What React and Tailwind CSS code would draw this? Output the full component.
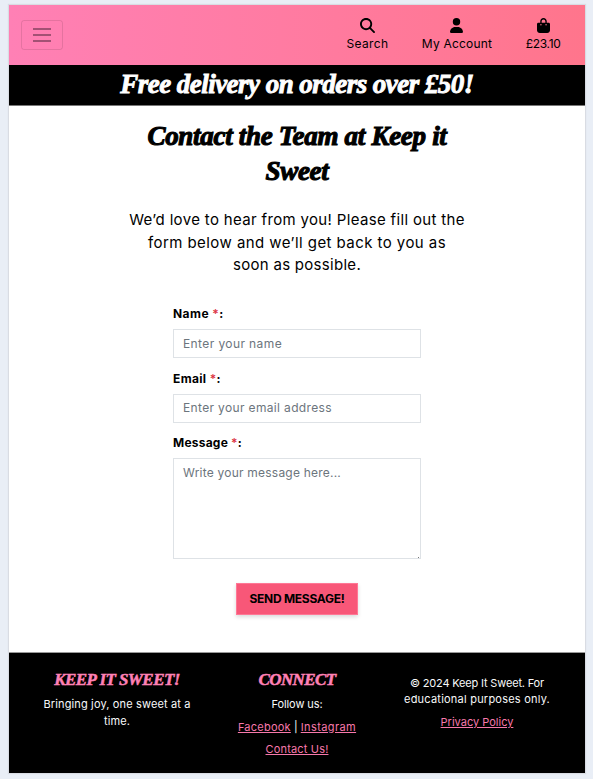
const display = "font-['Liberation_Serif',serif] font-bold italic";
const linkStyle = 'text-[#f778ab] underline underline-offset-[1px] decoration-1';

function SearchIcon() {
  return (
    <svg viewBox="0 0 512 512" className="size-[15px]" fill="currentColor">
      <path d="M416 208c0 45.900-14.900 88.300-40 122.700L502.600 457.400c12.500 12.500 12.500 32.800 0 45.300s-32.800 12.500-45.300 0L330.700 376c-34.400 25.200-76.800 40-122.700 40C93.100 416 0 322.900 0 208S93.100 0 208 0S416 93.100 416 208zM208 352a144 144 0 1 0 0-288 144 144 0 1 0 0 288z" />
    </svg>
  );
}

function UserIcon() {
  return (
    <svg viewBox="0 0 448 512" className="h-[15px] w-[13px]" fill="currentColor">
      <path d="M224 256A128 128 0 1 0 224 0a128 128 0 1 0 0 256zm-45.700 48C79.800 304 0 383.800 0 482.300C0 498.700 13.300 512 29.700 512H418.300c16.400 0 29.700-13.300 29.700-29.700C448 383.800 368.200 304 269.700 304H178.300z" />
    </svg>
  );
}

function BagIcon() {
  return (
    <svg viewBox="0 0 448 512" className="h-[15px] w-[13px]" fill="currentColor">
      <path d="M160 112c0-35.300 28.700-64 64-64s64 28.700 64 64v48H160V112zm-48 48H48c-26.500 0-48 21.500-48 48V416c0 53 43 96 96 96H352c53 0 96-43 96-96V208c0-26.500-21.500-48-48-48H336V112C336 50.100 285.900 0 224 0S112 50.100 112 112v48zm24 48a24 24 0 1 1 0 48 24 24 0 1 1 0-48zm152 24a24 24 0 1 1 48 0 24 24 0 1 1-48 0z" />
    </svg>
  );
}

function NavItem({ icon, label, className }) {
  return (
    <a className={`flex flex-col items-center text-[12px] leading-[18px] whitespace-nowrap ${className}`}>
      {icon}
      <span className="mt-[2px]">{label}</span>
    </a>
  );
}

function Label({ children, className }) {
  return (
    <label className={`block text-[12px] leading-[18px] font-bold ${className}`}>
      {children} <span className="font-semibold text-[#dc3545]">*</span>:
    </label>
  );
}

export default function App() {
  return (
    <div className="h-[779px] w-full bg-[#e9eef6] pt-[5px] pl-[9px] font-[Inter,sans-serif] text-black">
      <div className="flex h-[768px] w-[576px] flex-col bg-white shadow-[0_0_1px_1px_#d9dce3]">
        <header className="flex h-[60px] shrink-0 items-start justify-between bg-linear-to-r from-[#ff80b5] to-[#ff758c] pr-[24.500px] pl-[12px]">
          <button className="mt-[15px] flex h-[30px] w-[42px] flex-col items-center justify-center gap-[4px] rounded-[3px] border border-black/10">
            <span className="h-[2px] w-[18px] bg-[#a35174]" />
            <span className="h-[2px] w-[18px] bg-[#a35174]" />
            <span className="h-[2px] w-[18px] bg-[#a35174]" />
          </button>
          <nav className="flex gap-[33.500px] pt-[13px]">
            <NavItem icon={<SearchIcon />} label="Search" className="tracking-[0.31px]" />
            <NavItem icon={<UserIcon />} label="My Account" className="tracking-[0.2px]" />
            <NavItem icon={<BagIcon />} label="£23.10" className="tracking-[-0.3px]" />
          </nav>
        </header>

        <div className="h-[41px] shrink-0 border-b border-[#777] bg-black text-center">
          <h2 className={`${display} text-[27px] leading-[38px] tracking-[-0.54px] text-white [-webkit-text-stroke:0.9px_white]`}>
            Free delivery on orders over £50!
          </h2>
        </div>

        <main className="flex h-[546px] shrink-0 flex-col items-center">
          <h1 className={`${display} mt-[13px] text-center text-[27px] leading-[35px] tracking-[-0.3px] [-webkit-text-stroke:1.1px_black]`}>
            Contact the Team at Keep it
            <br />
            Sweet
          </h1>
          <p className="mt-[20px] text-center text-[15px] leading-[22.500px] whitespace-nowrap">
            <span className="tracking-[0.34px]">We’d love to hear from you! Please fill out the</span>
            <br />
            <span className="tracking-[0.44px]">form below and we’ll get back to you as</span>
            <br />
            <span className="tracking-[0.29px]">soon as possible.</span>
          </p>
          <form className="mt-[28px] flex w-[248px] flex-col">
            <Label className="tracking-[0.45px]">Name</Label>
            <input
              className="mt-[6px] h-[29px] border border-[#dee2e6] px-[9px] text-[12px] tracking-[0.4px] placeholder:text-[#6c757d]"
              placeholder="Enter your name"
            />
            <Label className="mt-[12px] tracking-[0.35px]">Email</Label>
            <input
              className="mt-[6px] h-[29px] border border-[#dee2e6] px-[9px] pb-[2px] text-[12px] tracking-[0.35px] placeholder:text-[#6c757d]"
              placeholder="Enter your email address"
            />
            <Label className="mt-[11px] tracking-[0.22px]">Message</Label>
            <div className="relative mt-[6px] flex">
              <textarea
                className="h-[101px] w-full resize-none border border-[#dee2e6] px-[9px] py-[5px] text-[12px] leading-[18px] tracking-[0.22px] placeholder:text-[#6c757d]"
                placeholder="Write your message here..."
              />
              <span className="absolute right-[2px] bottom-[1px] size-px bg-[#777]" />
            </div>
            <button
              type="button"
              className="mt-[24px] h-[32px] w-[122px] self-center border border-[#ff7795] bg-[#f85778] text-[12px] font-bold tracking-[-0.28px] whitespace-nowrap shadow-[0_2px_4px_rgba(0,0,0,0.15)]"
            >
              SEND MESSAGE!
            </button>
          </form>
        </main>

        <footer className="grid h-[121px] shrink-0 grid-cols-[216px_144px_216px] border-t border-[#999] bg-black text-center text-[11px] leading-[16.500px] whitespace-nowrap text-[#f8f9fa]">
          <div className="pt-[16px]">
            <h5 className={`${display} text-[17px] leading-[22px] tracking-[-0.57px] text-[#ff80b5] [-webkit-text-stroke:0.5px_#ff80b5]`}>
              KEEP IT SWEET!
            </h5>
            <p className="mt-[5px]">
              <span className="tracking-[0.14px]">Bringing joy, one sweet at a</span>
              <br />
              <span className="tracking-[0.1px]">time.</span>
            </p>
          </div>
          <div className="pt-[16px]">
            <h5 className={`${display} text-[17px] leading-[22px] tracking-[-0.6px] text-[#ff80b5] [-webkit-text-stroke:0.5px_#ff80b5]`}>
              CONNECT
            </h5>
            <p className="mt-[5px] tracking-[-0.1px]">Follow us:</p>
            <p className="mt-[6px]">
              <a className={`${linkStyle} tracking-[0.24px]`}>Facebook</a> |{' '}
              <a className={`${linkStyle} tracking-[0.4px]`}>Instagram</a>
            </p>
            <p className="mt-[6px]">
              <a className={`${linkStyle} tracking-[0.17px]`}>Contact Us!</a>
            </p>
          </div>
          <div className="pt-[22px]">
            <p className="leading-[16px]">
              <span className="tracking-[-0.17px]">© 2024 Keep It Sweet. For</span>
              <br />
              <span className="tracking-[0.22px]">educational purposes only.</span>
            </p>
            <p className="mt-[7px]">
              <a className={linkStyle}>Privacy Policy</a>
            </p>
          </div>
        </footer>
      </div>
    </div>
  );
}
